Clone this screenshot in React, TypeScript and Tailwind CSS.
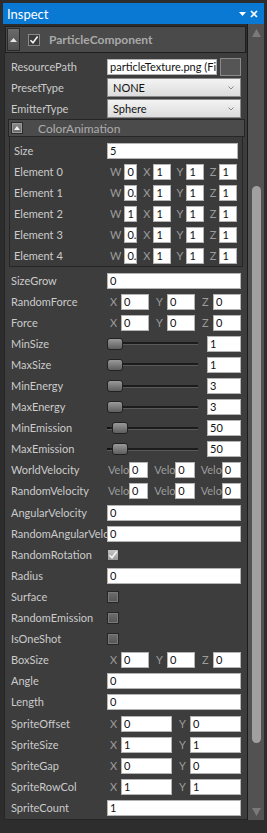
import React from 'react'

const font = "font-['Lato',sans-serif]"

function TextBox({ value, className = '' }: { value: string; className?: string }) {
  return (
    <div
      className={`h-[16px] bg-white border border-[#b4b4b4] text-[11px] leading-[14px] text-[#111] pl-[2px] overflow-hidden whitespace-nowrap ${className}`}
    >
      {value}
    </div>
  )
}

function Label({ text, w = 'w-[96px]' }: { text: string; w?: string }) {
  return (
    <div className={`${w} shrink-0 text-[11px] text-[#cbcbcb] overflow-hidden whitespace-nowrap leading-[14px]`}>
      {text}
    </div>
  )
}

function Row({ label, children }: { label: string; children?: React.ReactNode }) {
  return (
    <div className="flex items-center h-[21.1px] pl-[6px]">
      <Label text={label} />
      <div className="w-[134px] flex items-center">{children}</div>
    </div>
  )
}

function Axis({ axes, values, gap = 'gap-[4px]' }: { axes: string[]; values: string[]; gap?: string }) {
  return (
    <div className={`flex w-full ${gap}`}>
      {axes.map((a, i) => (
        <div key={i} className="flex flex-1 items-center min-w-0">
          <span className="pl-[3px] pr-[1px] w-[10px] box-content text-[11px] text-[#9c9c9c] leading-[14px]">{a}</span>
          <TextBox value={values[i]} className="flex-1 min-w-0" />
        </div>
      ))}
    </div>
  )
}

function Velo({ values }: { values: string[] }) {
  return (
    <div className="flex w-full gap-[5px]">
      {values.map((v, i) => (
        <div key={i} className="flex flex-1 items-center min-w-0">
          <span className="w-[22px] shrink-0 pl-[1px] overflow-hidden whitespace-nowrap text-[11px] text-[#9c9c9c] leading-[14px]">
            Velocity
          </span>
          <TextBox value={v} className="flex-1 min-w-0" />
        </div>
      ))}
    </div>
  )
}

function Slider({ value, offset = 0, tick = false }: { value: string; offset?: number; tick?: boolean }) {
  return (
    <div className="flex items-center w-full">
      <div className="relative w-[91px] h-[12px] flex items-center">
        <div className="w-full h-[3px] bg-[#1c1c1c] border-b border-[#5a5a5a]" />
        {tick && <div className="absolute left-0 top-[5px] w-[3px] h-[2px] bg-[#111]" />}
        <div
          className="absolute top-0 w-[16px] h-[12px] rounded-[3px] border border-[#222] bg-gradient-to-b from-[#9a9a9a] to-[#5e5e5e]"
          style={{ left: offset }}
        />
      </div>
      <div className="w-[9px]" />
      <TextBox value={value} className="flex-1" />
    </div>
  )
}

function Check({ checked = false }: { checked?: boolean }) {
  return checked ? (
    <div className="w-[12px] h-[12px] border border-[#3a3a3a] bg-gradient-to-b from-[#c4c4c4] to-[#9a9a9a] flex items-center justify-center">
      <svg width="10" height="10" viewBox="0 0 10 10">
        <path d="M1.5 5.2 L4 7.8 L8.6 1.6" stroke="#f4f4f4" strokeWidth="1.6" fill="none" />
      </svg>
    </div>
  ) : (
    <div className="w-[12px] h-[12px] border border-[#262626] bg-gradient-to-b from-[#6e6e6e] to-[#555] shadow-[inset_0_0_0_1px_#7a7a7a]" />
  )
}

function Dropdown({ value }: { value: string }) {
  return (
    <div className="w-full h-[19px] border border-[#8a8a8a] bg-gradient-to-b from-[#f3f3f3] to-[#dcdcdc] flex items-center justify-between pl-[5px] pr-[6px]">
      <span className="text-[11px] text-[#111] leading-[14px]">{value}</span>
      <svg width="6" height="4" viewBox="0 0 6 4">
        <path d="M0.5 0.5 L3 3 L5.5 0.5" stroke="#8a8a8a" strokeWidth="1" fill="none" />
      </svg>
    </div>
  )
}

function UpButton({ size }: { size: 'lg' | 'sm' }) {
  return size === 'lg' ? (
    <div className="w-[13px] h-[23px] border border-[#2a2a2a] bg-gradient-to-b from-[#6a6a6a] to-[#505050] flex items-center justify-center">
      <svg width="7" height="4" viewBox="0 0 7 4">
        <path d="M0 4 L3.5 0 L7 4 Z" fill="#e8e8e8" />
      </svg>
    </div>
  ) : (
    <div className="w-[12px] h-[12px] border border-[#2a2a2a] bg-gradient-to-b from-[#8a8a8a] to-[#6a6a6a] shadow-[inset_0_0_0_1px_#9a9a9a] flex items-center justify-center">
      <svg width="6" height="4" viewBox="0 0 6 4">
        <path d="M0 4 L3 0 L6 4 Z" fill="#f0f0f0" />
      </svg>
    </div>
  )
}

function ElementRow({ label, w }: { label: string; w: string }) {
  return (
    <div className="flex items-center h-[21px] pl-[4px]">
      <Label text={label} w="w-[93px]" />
      <div className="w-[130px] flex gap-[3px]">
        {['W', 'X', 'Y', 'Z'].map((a, i) => (
          <div key={a} className="flex flex-1 items-center min-w-0">
            <span className="px-[3px] text-[11px] text-[#9c9c9c] leading-[14px]">{a}</span>
            <TextBox value={i === 0 ? w : '1'} className="flex-1 min-w-0" />
          </div>
        ))}
      </div>
    </div>
  )
}

export default function App() {
  return (
    <div className={`w-[267px] h-[833px] bg-[#2d2d2d] pt-[3px] px-[3px] overflow-hidden ${font}`}>
      {/* title bar */}
      <div className="h-[21px] bg-[#0a79d3] flex items-center justify-between pl-[4px] pr-[6px]">
        <span className="text-[13px] text-white leading-[16px]">Inspect</span>
        <div className="flex items-center gap-[4px]">
          <svg width="7" height="4" viewBox="0 0 7 4">
            <path d="M0 0 L7 0 L3.5 4 Z" fill="#fff" />
          </svg>
          <svg width="8" height="8" viewBox="0 0 8 8">
            <path d="M1 1 L7 7 M7 1 L1 7" stroke="#fff" strokeWidth="1.6" />
          </svg>
        </div>
      </div>

      <div className="flex h-[796px]">
        {/* content */}
        <div className="w-[244px] flex flex-col pt-[2px] pl-[1px]">
          <div className="ml-[1px] w-[241px] h-[27px] border border-[#1f1f1f] bg-[#4a4a4a] flex items-center pl-[1px]">
            <UpButton size="lg" />
            <div className="ml-[8px] w-[12px] h-[12px] border border-[#8a8a8a] bg-[#3c3c3c] flex items-center justify-center">
              <svg width="10" height="10" viewBox="0 0 10 10">
                <path d="M1.5 5.2 L4 7.8 L8.6 1.6" stroke="#f2f2f2" strokeWidth="1.6" fill="none" />
              </svg>
            </div>
            <span className="ml-[9px] text-[12px] font-bold text-[#a9a9a9] leading-[15px]">ParticleComponent</span>
          </div>

          <div className="flex-1 border-l border-b border-[#262626] bg-[#3d3d3d] pt-[3px]">
            <div className="flex items-center h-[21px] pl-[6px]">
              <Label text="ResourcePath" />
              <div className="w-[134px] flex items-center">
                <TextBox value="particleTexture.png (File)" className="w-[110px]" />
                <div className="ml-[3px] w-[21px] h-[18px] border border-[#8a8a8a] bg-[#555]" />
              </div>
            </div>
            <div className="flex items-center h-[21px] pl-[6px]">
              <Label text="PresetType" />
              <div className="w-[134px]">
                <Dropdown value="NONE" />
              </div>
            </div>
            <div className="flex items-center h-[21px] pl-[6px]">
              <Label text="EmitterType" />
              <div className="w-[134px]">
                <Dropdown value="Sphere" />
              </div>
            </div>

            {/* ColorAnimation */}
            <div className="ml-[3px] w-[237px] h-[18px] border border-[#262626] bg-[#4b4b4b] flex items-center pl-[2px]">
              <UpButton size="sm" />
              <span className="ml-[15px] text-[12px] text-[#ababab] leading-[15px]">ColorAnimation</span>
            </div>
            <div className="ml-[4px] w-[234px] h-[130px] border border-[#262626] border-t-0 bg-[#3b3b3b] pt-[3px]">
              <div className="flex items-center h-[21px] pl-[4px]">
                <Label text="Size" w="w-[93px]" />
                <TextBox value="5" className="w-[131px]" />
              </div>
              <ElementRow label="Element 0" w="0" />
              <ElementRow label="Element 1" w="0.75" />
              <ElementRow label="Element 2" w="1" />
              <ElementRow label="Element 3" w="0.75" />
              <ElementRow label="Element 4" w="0.25" />
            </div>

            <div className="h-[3px]" />
            <Row label="SizeGrow"><TextBox value="0" className="w-full" /></Row>
            <Row label="RandomForce"><Axis axes={['X', 'Y', 'Z']} values={['0', '0', '0']} /></Row>
            <Row label="Force"><Axis axes={['X', 'Y', 'Z']} values={['0', '0', '0']} /></Row>
            <Row label="MinSize"><Slider value="1" /></Row>
            <Row label="MaxSize"><Slider value="1" /></Row>
            <Row label="MinEnergy"><Slider value="3" /></Row>
            <Row label="MaxEnergy"><Slider value="3" /></Row>
            <Row label="MinEmission"><Slider value="50" offset={5} tick /></Row>
            <Row label="MaxEmission"><Slider value="50" offset={5} tick /></Row>
            <Row label="WorldVelocity"><Velo values={['0', '0', '0']} /></Row>
            <Row label="RandomVelocity"><Velo values={['0', '0', '0']} /></Row>
            <Row label="AngularVelocity"><TextBox value="0" className="w-full" /></Row>
            <Row label="RandomAngularVelocity"><TextBox value="0" className="w-full" /></Row>
            <Row label="RandomRotation"><Check checked /></Row>
            <Row label="Radius"><TextBox value="0" className="w-full" /></Row>
            <Row label="Surface"><Check /></Row>
            <Row label="RandomEmission"><Check /></Row>
            <Row label="IsOneShot"><Check /></Row>
            <Row label="BoxSize"><Axis axes={['X', 'Y', 'Z']} values={['0', '0', '0']} /></Row>
            <Row label="Angle"><TextBox value="0" className="w-full" /></Row>
            <Row label="Length"><TextBox value="0" className="w-full" /></Row>
            <Row label="SpriteOffset"><Axis axes={['X', 'Y']} values={['0', '0']} /></Row>
            <Row label="SpriteSize"><Axis axes={['X', 'Y']} values={['1', '1']} /></Row>
            <Row label="SpriteGap"><Axis axes={['X', 'Y']} values={['0', '0']} /></Row>
            <Row label="SpriteRowCol"><Axis axes={['X', 'Y']} values={['1', '1']} /></Row>
            <Row label="SpriteCount"><TextBox value="1" className="w-full" /></Row>
          </div>
        </div>

        {/* scrollbar */}
        <div className="w-[17px] border-l border-[#1a1a1a] bg-[#525252] flex flex-col items-center pt-[5px] pb-[4px]">
          <svg width="9" height="8" viewBox="0 0 9 8">
            <path d="M0 8 L4.5 0 L9 8 Z" fill="#7a7a7a" />
          </svg>
          <div className="flex-1 w-full flex flex-col items-center">
            <div className="h-[149px]" />
            <div className="w-[9px] h-[557px] rounded-[5px] bg-[#a0a0a0]" />
          </div>
          <svg width="9" height="8" viewBox="0 0 9 8">
            <path d="M0 0 L9 0 L4.5 8 Z" fill="#7a7a7a" />
          </svg>
        </div>
      </div>
    </div>
  )
}
